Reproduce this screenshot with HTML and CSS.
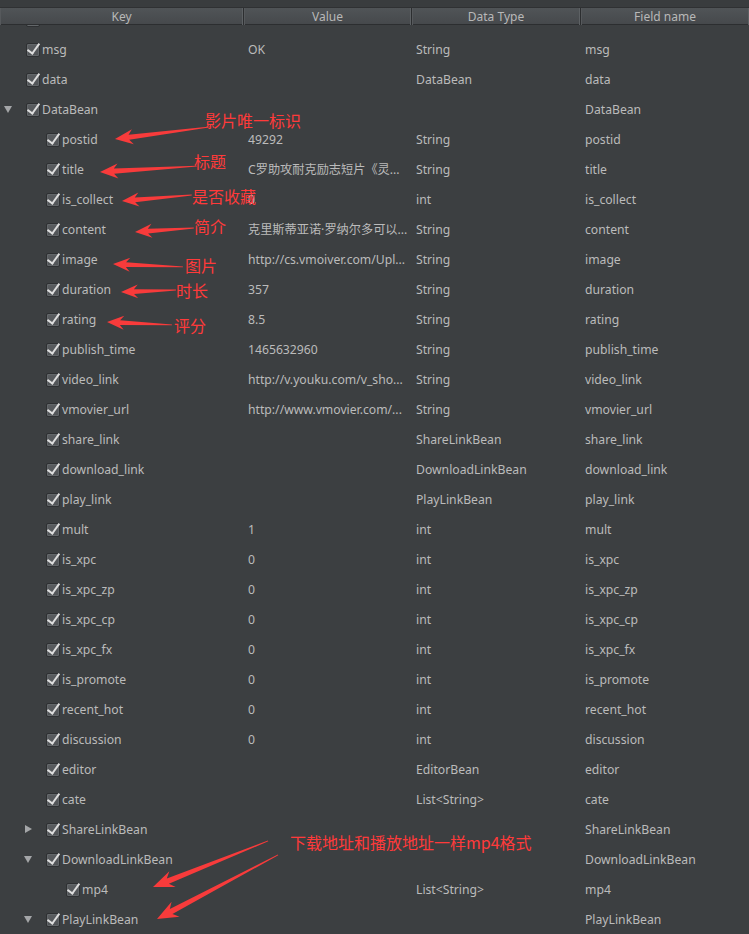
FILE: index.html
```html
<!DOCTYPE html>
<html>
<head>
<meta charset="utf-8">
<link rel="stylesheet" href="styles.css">
</head>
<body>
<div class="window">
  <div class="topbar"></div>
  <div class="thead">
    <div class="th">Key</div>
    <div class="th">Value</div>
    <div class="th">Data Type</div>
    <div class="th last">Field name</div>
  </div>
  <div class="tbody">
    <div class="rows">
      <div class="row"><div class="key l0"><span class="tw"></span><span class="cb"></span><span class="k">code</span></div><div class="c">0</div><div class="c">int</div><div class="c">code</div></div>
      <div class="row"><div class="key l0"><span class="tw"></span><span class="cb"></span><span class="k">msg</span></div><div class="c">OK</div><div class="c">String</div><div class="c">msg</div></div>
      <div class="row"><div class="key l0"><span class="tw"></span><span class="cb"></span><span class="k">data</span></div><div class="c"></div><div class="c">DataBean</div><div class="c">data</div></div>
      <div class="row"><div class="key l0"><span class="tw down"></span><span class="cb"></span><span class="k">DataBean</span></div><div class="c"></div><div class="c"></div><div class="c">DataBean</div></div>
      <div class="row"><div class="key l1"><span class="tw"></span><span class="cb"></span><span class="k">postid</span></div><div class="c">49292</div><div class="c">String</div><div class="c">postid</div></div>
      <div class="row"><div class="key l1"><span class="tw"></span><span class="cb"></span><span class="k">title</span></div><div class="c">C罗助攻耐克励志短片《灵...</div><div class="c">String</div><div class="c">title</div></div>
      <div class="row"><div class="key l1"><span class="tw"></span><span class="cb"></span><span class="k">is_collect</span></div><div class="c">0</div><div class="c">int</div><div class="c">is_collect</div></div>
      <div class="row"><div class="key l1"><span class="tw"></span><span class="cb"></span><span class="k">content</span></div><div class="c">克里斯蒂亚诺·罗纳尔多可以...</div><div class="c">String</div><div class="c">content</div></div>
      <div class="row"><div class="key l1"><span class="tw"></span><span class="cb"></span><span class="k">image</span></div><div class="c">http://cs.vmoiver.com/Upl...</div><div class="c">String</div><div class="c">image</div></div>
      <div class="row"><div class="key l1"><span class="tw"></span><span class="cb"></span><span class="k">duration</span></div><div class="c">357</div><div class="c">String</div><div class="c">duration</div></div>
      <div class="row"><div class="key l1"><span class="tw"></span><span class="cb"></span><span class="k">rating</span></div><div class="c">8.5</div><div class="c">String</div><div class="c">rating</div></div>
      <div class="row"><div class="key l1"><span class="tw"></span><span class="cb"></span><span class="k">publish_time</span></div><div class="c">1465632960</div><div class="c">String</div><div class="c">publish_time</div></div>
      <div class="row"><div class="key l1"><span class="tw"></span><span class="cb"></span><span class="k">video_link</span></div><div class="c">http://v.youku.com/v_sho...</div><div class="c">String</div><div class="c">video_link</div></div>
      <div class="row"><div class="key l1"><span class="tw"></span><span class="cb"></span><span class="k">vmovier_url</span></div><div class="c">http://www.vmovier.com/...</div><div class="c">String</div><div class="c">vmovier_url</div></div>
      <div class="row"><div class="key l1"><span class="tw"></span><span class="cb"></span><span class="k">share_link</span></div><div class="c"></div><div class="c">ShareLinkBean</div><div class="c">share_link</div></div>
      <div class="row"><div class="key l1"><span class="tw"></span><span class="cb"></span><span class="k">download_link</span></div><div class="c"></div><div class="c">DownloadLinkBean</div><div class="c">download_link</div></div>
      <div class="row"><div class="key l1"><span class="tw"></span><span class="cb"></span><span class="k">play_link</span></div><div class="c"></div><div class="c">PlayLinkBean</div><div class="c">play_link</div></div>
      <div class="row"><div class="key l1"><span class="tw"></span><span class="cb"></span><span class="k">mult</span></div><div class="c">1</div><div class="c">int</div><div class="c">mult</div></div>
      <div class="row"><div class="key l1"><span class="tw"></span><span class="cb"></span><span class="k">is_xpc</span></div><div class="c">0</div><div class="c">int</div><div class="c">is_xpc</div></div>
      <div class="row"><div class="key l1"><span class="tw"></span><span class="cb"></span><span class="k">is_xpc_zp</span></div><div class="c">0</div><div class="c">int</div><div class="c">is_xpc_zp</div></div>
      <div class="row"><div class="key l1"><span class="tw"></span><span class="cb"></span><span class="k">is_xpc_cp</span></div><div class="c">0</div><div class="c">int</div><div class="c">is_xpc_cp</div></div>
      <div class="row"><div class="key l1"><span class="tw"></span><span class="cb"></span><span class="k">is_xpc_fx</span></div><div class="c">0</div><div class="c">int</div><div class="c">is_xpc_fx</div></div>
      <div class="row"><div class="key l1"><span class="tw"></span><span class="cb"></span><span class="k">is_promote</span></div><div class="c">0</div><div class="c">int</div><div class="c">is_promote</div></div>
      <div class="row"><div class="key l1"><span class="tw"></span><span class="cb"></span><span class="k">recent_hot</span></div><div class="c">0</div><div class="c">int</div><div class="c">recent_hot</div></div>
      <div class="row"><div class="key l1"><span class="tw"></span><span class="cb"></span><span class="k">discussion</span></div><div class="c">0</div><div class="c">int</div><div class="c">discussion</div></div>
      <div class="row"><div class="key l1"><span class="tw"></span><span class="cb"></span><span class="k">editor</span></div><div class="c"></div><div class="c">EditorBean</div><div class="c">editor</div></div>
      <div class="row"><div class="key l1"><span class="tw"></span><span class="cb"></span><span class="k">cate</span></div><div class="c"></div><div class="c">List&lt;String&gt;</div><div class="c">cate</div></div>
      <div class="row"><div class="key l1"><span class="tw right"></span><span class="cb"></span><span class="k">ShareLinkBean</span></div><div class="c"></div><div class="c"></div><div class="c">ShareLinkBean</div></div>
      <div class="row"><div class="key l1"><span class="tw down"></span><span class="cb"></span><span class="k">DownloadLinkBean</span></div><div class="c"></div><div class="c"></div><div class="c">DownloadLinkBean</div></div>
      <div class="row"><div class="key l2"><span class="tw"></span><span class="cb"></span><span class="k">mp4</span></div><div class="c"></div><div class="c">List&lt;String&gt;</div><div class="c">mp4</div></div>
      <div class="row"><div class="key l1"><span class="tw down"></span><span class="cb"></span><span class="k">PlayLinkBean</span></div><div class="c"></div><div class="c"></div><div class="c">PlayLinkBean</div></div>
    </div>
  </div>

  <div class="overlay">
    <svg class="arrows" width="749" height="934" viewBox="0 0 749 934">
      <g fill="#f83b3b">
        <path transform="translate(115 139) rotate(-7.2)" d="M0 0 L18 -7.5 L14 -2.6 L96 -0.4 L96 0.4 L14 2.6 L18 7.5 Z"/>
        <path transform="translate(100 172) rotate(-3.5)" d="M0 0 L18 -7.5 L14 -2.6 L97 -0.4 L97 0.4 L14 2.6 L18 7.5 Z"/>
        <path transform="translate(122 201) rotate(-4.9)" d="M0 0 L17 -7 L13 -2.4 L70 -0.4 L70 0.4 L13 2.4 L17 7 Z"/>
        <path transform="translate(135 232) rotate(-3.9)" d="M0 0 L17 -7 L13 -2.4 L59 -0.4 L59 0.4 L13 2.4 L17 7 Z"/>
        <path transform="translate(113 264) rotate(2.4)" d="M0 0 L17 -7 L13 -2.4 L70 -0.4 L70 0.4 L13 2.4 L17 7 Z"/>
        <path transform="translate(121 292) rotate(-2.1)" d="M0 0 L17 -7 L13 -2.4 L55 -0.4 L55 0.4 L13 2.4 L17 7 Z"/>
        <path transform="translate(107 322) rotate(2.6)" d="M0 0 L17 -7 L13 -2.4 L65 -0.4 L65 0.4 L13 2.4 L17 7 Z"/>
        <path transform="translate(153 887) rotate(-21.8)" d="M0 0 L21 -8.5 L16 -2.8 L124 -0.4 L124 0.4 L16 2.8 L21 8.5 Z"/>
        <path transform="translate(157 919) rotate(-27.9)" d="M0 0 L21 -8.5 L16 -2.8 L137 -0.4 L137 0.4 L16 2.8 L21 8.5 Z"/>
      </g>
    </svg>
    <span class="note n1">影片唯一标识</span>
    <span class="note n2">标题</span>
    <span class="note n3">是否收藏</span>
    <span class="note n4">简介</span>
    <span class="note n5">图片</span>
    <span class="note n6">时长</span>
    <span class="note n7">评分</span>
    <span class="note n8">下载地址和播放地址一样mp4格式</span>
  </div>
</div>
</body>
</html>
```

FILE: styles.css
```css
html, body {
  margin: 0;
  padding: 0;
  background: #3c3f41;
}
.window {
  position: relative;
  width: 749px;
  height: 934px;
  overflow: hidden;
  background: #3c3f41;
  font-family: "Noto Sans", "Noto Sans CJK SC", sans-serif;
  font-size: 12.2px;
  color: #bbbbbb;
}
.topbar {
  height: 7px;
  background: #393c3e;
  border-bottom: 1px solid #2f3133;
}
.thead {
  display: grid;
  grid-template-columns: 244px 168px 169px 1fr;
  height: 16px;
  background: linear-gradient(#505457, #46494c);
  border-bottom: 1px solid #2c2e30;
  position: relative;
  z-index: 2;
}
.th {
  font-size: 12px;
  line-height: 17px;
  text-align: center;
  color: #b8b8b8;
  border-right: 1px solid #2c2e30;
  box-shadow: inset -1px 0 0 #5d6164, inset 1px 0 0 #56595c;
}
.th.last { border-right: none; }
.tbody {
  height: 909px;
  overflow: hidden;
}
.rows {
  margin-top: -21px;
}
.row {
  display: grid;
  grid-template-columns: 244px 168px 169px 1fr;
  height: 30px;
  box-sizing: border-box;
  padding-top: 2px;
  line-height: 28px;
  white-space: nowrap;
}
.c {
  padding-left: 4px;
  overflow: hidden;
}
.key {
  display: flex;
  align-items: center;
}
.key.l0 { padding-left: 4px; }
.key.l1 { padding-left: 24px; }
.key.l2 { padding-left: 44px; }
.tw {
  width: 22px;
  height: 28px;
  flex: none;
  position: relative;
}
.tw.down::before {
  content: "";
  position: absolute;
  left: 0;
  top: 10px;
  border-left: 4.5px solid transparent;
  border-right: 4.5px solid transparent;
  border-top: 7px solid #a4a6a8;
}
.tw.right::before {
  content: "";
  position: absolute;
  left: 1px;
  top: 9px;
  border-top: 4.5px solid transparent;
  border-bottom: 4.5px solid transparent;
  border-left: 7px solid #a4a6a8;
}
.cb {
  width: 14px;
  height: 14px;
  flex: none;
  margin-right: 2px;
  position: relative;
  box-sizing: border-box;
  border: 1px solid #2e3032;
  border-radius: 2px;
  background: linear-gradient(#5a5d60, #505356);
  box-shadow: inset 0 0 0 1px #63676a;
}
.cb::after {
  content: "";
  position: absolute;
  left: 3px;
  top: -3px;
  width: 5px;
  height: 11px;
  border-right: 2.4px solid #dedede;
  border-bottom: 2.4px solid #dedede;
  transform: rotate(36deg);
  transform-origin: center;
}

.overlay {
  position: absolute;
  left: 0;
  top: 0;
  width: 749px;
  height: 934px;
  pointer-events: none;
  z-index: 3;
}
.arrows {
  position: absolute;
  left: 0;
  top: 0;
}
.note {
  position: absolute;
  font-family: "Noto Sans CJK SC", "Noto Sans", sans-serif;
  font-size: 16px;
  line-height: 16px;
  color: #ff3a3a;
  white-space: nowrap;
}
.n1 { left: 205px; top: 112px; }
.n2 { left: 194px; top: 153px; }
.n3 { left: 192px; top: 188px; }
.n4 { left: 194px; top: 218px; }
.n5 { left: 185px; top: 257px; }
.n6 { left: 176px; top: 282px; }
.n7 { left: 174px; top: 317px; }
.n8 { left: 290px; top: 834px; }
```
